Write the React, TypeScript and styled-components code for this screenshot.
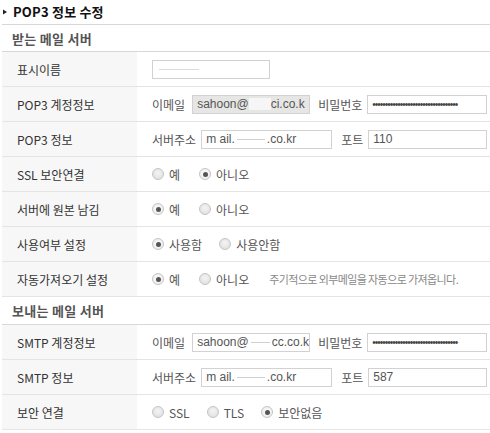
import React from "react";
import styled, { createGlobalStyle, css } from "styled-components";

const Global = createGlobalStyle`
  html, body { margin: 0; padding: 0; background: #fff; }
  body {
    font-family: "Noto Sans CJK KR", "Noto Sans", sans-serif;
    font-size: 12px;
    color: #333;
  }
`;

const Page = styled.div`
  width: 490px;
  padding-left: 2px;
  box-sizing: border-box;
`;

const TitleBar = styled.div`
  height: 25px;
  box-sizing: border-box;
  padding-bottom: 1px;
  display: flex;
  align-items: center;
  gap: 4px;
  border-bottom: 1px solid #d8d8d8;
  font-weight: bold;
  font-size: 13px;
  letter-spacing: 0.2px;
  color: #111;
`;

const Bullet = styled.svg`
  width: 6px;
  height: 6px;
  margin-right: 1px;
`;

const SectionHeader = styled.div<{ $h: number }>`
  height: ${(p) => p.$h}px;
  box-sizing: border-box;
  display: flex;
  align-items: center;
  padding-left: 10px;
  border-bottom: 1px solid #d8d8d8;
  font-weight: bold;
  font-size: 13px;
  letter-spacing: 0.3px;
  color: #555;
`;

const Row = styled.div`
  display: grid;
  grid-template-columns: 135px 1fr;
  height: 35px;
  box-sizing: border-box;
  border-bottom: 1px solid #e4e4e4;
`;

const Label = styled.div`
  background: #f7f7f7;
  display: flex;
  align-items: center;
  padding-left: 15px;
  color: #333;
  white-space: nowrap;
`;

const Value = styled.div`
  display: flex;
  align-items: center;
  padding-left: 15px;
  color: #555;
  white-space: nowrap;
`;

const FieldLabel = styled.span<{ $mr?: number; $ml?: number }>`
  margin-right: ${(p) => p.$mr ?? 4}px;
  margin-left: ${(p) => p.$ml ?? 0}px;
  color: #555;
`;

const Box = styled.div<{ $w: number; $disabled?: boolean }>`
  width: ${(p) => p.$w}px;
  height: 19px;
  box-sizing: border-box;
  border: 1px solid #d2d2d2;
  background: ${(p) => (p.$disabled ? "#e6e6e4" : "#fff")};
  display: flex;
  align-items: center;
  padding-left: 4px;
  font-family: "Liberation Sans", "Noto Sans CJK KR", sans-serif;
  font-size: 12px;
  color: #555;
  overflow: hidden;
  white-space: nowrap;
`;

const Redact = styled.span<{ $w: number; $bg: string }>`
  display: inline-block;
  width: ${(p) => p.$w}px;
  height: 1px;
  background: ${(p) => p.$bg};
  margin: 0 2px;
  vertical-align: middle;
`;

const Smear = styled.span<{ $w: number }>`
  display: inline-block;
  width: ${(p) => p.$w}px;
  height: 12px;
  background: #f6f6f6;
  vertical-align: middle;
`;

const Dots = styled.span`
  font-family: "Liberation Sans", sans-serif;
  font-size: 10px;
  letter-spacing: -1px;
  color: #444;
`;

const RadioGroup = styled.div`
  display: flex;
  align-items: center;
`;

const RadioItem = styled.label<{ $gap: number }>`
  display: flex;
  align-items: center;
  margin-right: ${(p) => p.$gap}px;
  color: #555;
`;

const RadioCircle = styled.span<{ $on?: boolean }>`
  width: 12px;
  height: 12px;
  box-sizing: border-box;
  border-radius: 50%;
  border: 1px solid #c4c4c4;
  background: radial-gradient(circle at 50% 40%, #f4f4f4 0%, #dcdcdc 100%);
  margin-right: 5px;
  position: relative;
  ${(p) =>
    p.$on &&
    css`
      background: radial-gradient(circle, #fff 0%, #e8e8e8 100%);
      &::after {
        content: "";
        position: absolute;
        left: 2.5px;
        top: 2.5px;
        width: 5px;
        height: 5px;
        border-radius: 50%;
        background: #555;
      }
    `}
`;

const Note = styled.span`
  margin-left: 20px;
  font-size: 11px;
  letter-spacing: -0.6px;
  color: #888;
`;

type RadioOpt = { label: string; on?: boolean; gap: number };

const Radios = ({ opts }: { opts: RadioOpt[] }) => (
  <RadioGroup>
    {opts.map((o) => (
      <RadioItem key={o.label} $gap={o.gap}>
        <RadioCircle $on={o.on} />
        {o.label}
      </RadioItem>
    ))}
  </RadioGroup>
);

const PW = "•".repeat(34);

export default function App() {
  return (
    <>
      <Global />
      <Page>
        <TitleBar>
          <Bullet viewBox="0 0 6 6">
            <path d="M1 0.5 L5 3 L1 5.5 Z" fill="#222" />
          </Bullet>
          POP3 정보 수정
        </TitleBar>
        <SectionHeader $h={27}>받는 메일 서버</SectionHeader>
        <Row>
          <Label>표시이름</Label>
          <Value>
            <Box $w={118}>
              <Redact $w={40} $bg="#dcdcdc" />
            </Box>
          </Value>
        </Row>
        <Row>
          <Label>POP3 계정정보</Label>
          <Value>
            <FieldLabel $mr={7}>이메일</FieldLabel>
            <Box $w={118} $disabled>
              sahoon@
              <Smear $w={22} />
              ci.co.k
            </Box>
            <FieldLabel $ml={8} $mr={5}>비밀번호</FieldLabel>
            <Box $w={120}>
              <Dots>{PW}</Dots>
            </Box>
          </Value>
        </Row>
        <Row>
          <Label>POP3 정보</Label>
          <Value>
            <FieldLabel $mr={5}>서버주소</FieldLabel>
            <Box $w={131}>
              m ail.
              <Redact $w={28} $bg="#cfcfcf" />
              .co.kr
            </Box>
            <FieldLabel $ml={9} $mr={5}>포트</FieldLabel>
            <Box $w={119}>110</Box>
          </Value>
        </Row>
        <Row>
          <Label>SSL 보안연결</Label>
          <Value>
            <Radios
              opts={[
                { label: "예", gap: 19 },
                { label: "아니오", on: true, gap: 0 },
              ]}
            />
          </Value>
        </Row>
        <Row>
          <Label>서버에 원본 남김</Label>
          <Value>
            <Radios
              opts={[
                { label: "예", on: true, gap: 19 },
                { label: "아니오", gap: 0 },
              ]}
            />
          </Value>
        </Row>
        <Row>
          <Label>사용여부 설정</Label>
          <Value>
            <Radios
              opts={[
                { label: "사용함", on: true, gap: 17 },
                { label: "사용안함", gap: 0 },
              ]}
            />
          </Value>
        </Row>
        <Row>
          <Label>자동가져오기 설정</Label>
          <Value>
            <Radios
              opts={[
                { label: "예", on: true, gap: 19 },
                { label: "아니오", gap: 0 },
              ]}
            />
            <Note>주기적으로 외부메일을 자동으로 가져옵니다.</Note>
          </Value>
        </Row>
        <SectionHeader $h={28}>보내는 메일 서버</SectionHeader>
        <Row>
          <Label>SMTP 계정정보</Label>
          <Value>
            <FieldLabel $mr={7}>이메일</FieldLabel>
            <Box $w={118}>
              sahoon@
              <Redact $w={22} $bg="#d0d0d0" />
              cc.co.k
            </Box>
            <FieldLabel $ml={8} $mr={5}>비밀번호</FieldLabel>
            <Box $w={120}>
              <Dots>{PW}</Dots>
            </Box>
          </Value>
        </Row>
        <Row>
          <Label>SMTP 정보</Label>
          <Value>
            <FieldLabel $mr={5}>서버주소</FieldLabel>
            <Box $w={131}>
              m ail.
              <Redact $w={28} $bg="#cfcfcf" />
              .co.kr
            </Box>
            <FieldLabel $ml={9} $mr={5}>포트</FieldLabel>
            <Box $w={119}>587</Box>
          </Value>
        </Row>
        <Row>
          <Label>보안 연결</Label>
          <Value>
            <Radios
              opts={[
                { label: "SSL", gap: 17 },
                { label: "TLS", gap: 17 },
                { label: "보안없음", on: true, gap: 0 },
              ]}
            />
          </Value>
        </Row>
      </Page>
    </>
  );
}
